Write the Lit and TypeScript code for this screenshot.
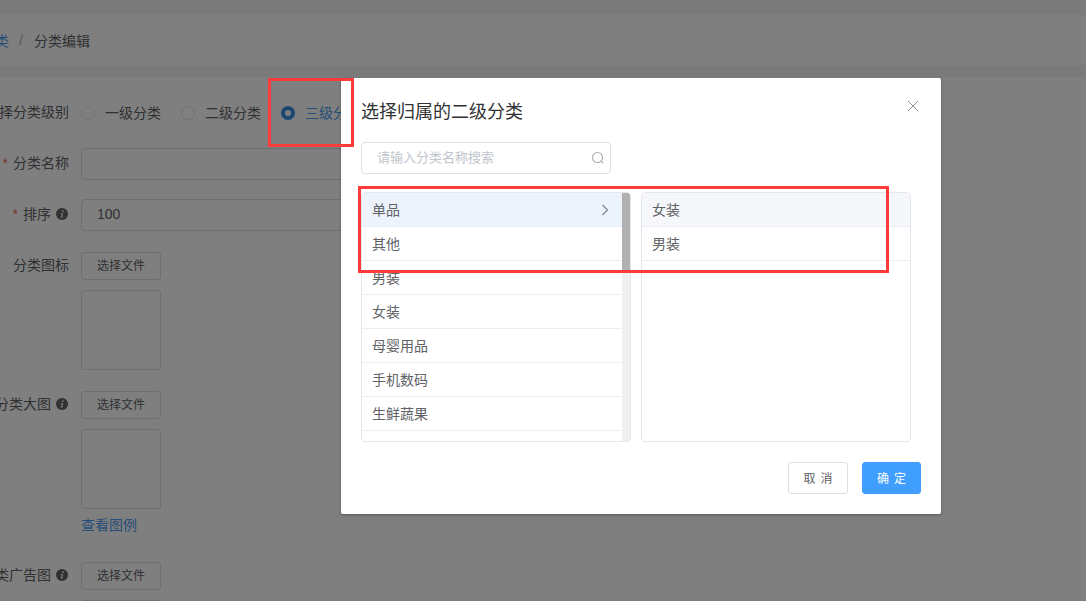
import { LitElement, html, css } from "lit";
import { customElement } from "lit/decorators.js";

const info = html`<svg class="info" viewBox="0 0 12 12"><circle cx="6" cy="6" r="6" fill="#606266"></circle><path d="M6.900 2.200a.9.9 0 1 1-.1 1.800.9.9 0 0 1 .1-1.800ZM4.600 5.200h2.600L6.300 8.700h.7l-.1.7H4.400l.1-.7h.6l.7-2.800H4.500Z" fill="#fff"></path></svg>`;
const leftItems = ["单品", "其他", "男装", "女装", "母婴用品", "手机数码", "生鲜蔬果", ""];
const rightItems = ["女装", "男装"];

@customElement("app-root")
export class AppRoot extends LitElement {
  static styles = css`
    :host {
      display: block;
      position: relative;
      width: 1086px;
      height: 601px;
      overflow: hidden;
      background: #fff;
      font-family: "Liberation Sans", "Noto Sans CJK SC", sans-serif;
      font-size: 14px;
      color: #606266;
    }
    .topbar { height: 15px; background: #f4f4f4; }
    .crumbs {
      height: 50px;
      display: flex;
      align-items: center;
      gap: 9px;
      margin-left: -19px;
      background: #fff;
    }
    .crumbs .link { color: #4a9cf0; }
    .crumbs .sep { color: #a8abb2; margin: 0 2px 0 1px; }
    .crumbs .cur { color: #606266; }
    .gap { height: 12px; background: #f4f4f4; }
    .form { padding-top: 20px; display: flex; flex-direction: column; }
    .row { display: flex; align-items: flex-start; }
    .label {
      width: 69px;
      flex: none;
      margin-right: 12px;
      box-sizing: border-box;
      padding-bottom: 2px;
      display: flex;
      justify-content: flex-end;
      align-items: center;
      gap: 5px;
      white-space: nowrap;
      height: 28px;
    }
    .tall { height: 32px; }
    .txt { display: block; padding-bottom: 2px; }
    .star { color: #f56c6c; margin-right: 5px; }
    .info { width: 12px; height: 12px; flex: none; margin-right: 1px; }
    .radios { display: flex; align-items: center; height: 32px; }
    .radio { display: flex; align-items: center; width: 100px; white-space: nowrap; }
    .dot {
      width: 14px;
      height: 14px;
      box-sizing: border-box;
      border: 1px solid #e0e2e6;
      border-radius: 50%;
      margin-right: 10px;
      flex: none;
    }
    .on { color: #4a9cf0; }
    .on .dot { border: 4px solid #3a8ee6; background: #fff; }
    .inp {
      width: 500px;
      height: 32px;
      box-sizing: border-box;
      border: 1px solid #dcdfe6;
      border-radius: 4px;
      padding: 0 0 2px 15px;
      display: flex;
      align-items: center;
    }
    .btn {
      width: 80px;
      height: 28px;
      box-sizing: border-box;
      border: 1px solid #dcdfe6;
      border-radius: 3px;
      padding-bottom: 3px;
      font-size: 12px;
      display: flex;
      align-items: center;
      justify-content: center;
    }
    .preview {
      width: 80px;
      height: 80px;
      box-sizing: border-box;
      border: 1px solid #dcdfe6;
      border-radius: 3px;
      margin-top: 10px;
    }
    .view { color: #4a9cf0; height: 20px; line-height: 20px; margin-top: 6px; }
    .m19 { margin-top: 19px; }
    .m21 { margin-top: 21px; }
    .m27 { margin-top: 27px; }

    .mask {
      position: absolute;
      inset: 0;
      background: rgba(0, 0, 0, 0.5);
    }
    .dialog {
      position: absolute;
      left: 341px;
      top: 78px;
      width: 600px;
      height: 436px;
      box-sizing: border-box;
      background: #fff;
      border-radius: 2px;
      box-shadow: 0 1px 3px rgba(0, 0, 0, 0.3);
      padding: 20px;
      display: flex;
      flex-direction: column;
    }
    .title {
      font-size: 18px;
      line-height: 28px;
      color: #303133;
    }
    .close {
      position: absolute;
      right: 22px;
      top: 22px;
      width: 12px;
      height: 12px;
    }
    .search {
      width: 250px;
      height: 32px;
      box-sizing: border-box;
      margin-top: 16px;
      border: 1px solid #dcdfe6;
      border-radius: 4px;
      padding: 0 5px 0 15px;
      display: flex;
      align-items: center;
      justify-content: space-between;
      font-size: 13px;
      color: #c0c4cc;
    }
    .search span { padding-bottom: 4px; }
    .search svg { width: 14px; height: 14px; }
    .panels { display: flex; gap: 10px; margin-top: 18px; height: 250px; }
    .panel {
      width: 270px;
      box-sizing: border-box;
      border: 1px solid #e4e7ed;
      border-radius: 4px;
      overflow: hidden;
      display: flex;
    }
    .list { flex: 1; min-width: 0; overflow: hidden; }
    .item {
      height: 34px;
      box-sizing: border-box;
      border-bottom: 1px solid #ebeef5;
      padding: 0 10px;
      display: flex;
      align-items: center;
      justify-content: space-between;
    }
    .item span { padding-bottom: 2px; }
    .left .active { background: #ecf3fd; }
    .right .active { background: #f5f7fa; }
    .item svg { width: 10px; height: 12px; margin-right: 2px; }
    .track { width: 8px; flex: none; background: #f0f0f0; }
    .thumb { height: 79px; background: #b1b1b1; }
    .footer {
      margin-top: 20px;
      display: flex;
      justify-content: flex-end;
      gap: 14px;
    }
    .fbtn {
      width: 60px;
      height: 32px;
      box-sizing: border-box;
      border: 1px solid #dcdfe6;
      border-radius: 3px;
      padding-bottom: 2px;
      font-size: 12px;
      word-spacing: 1.500px;
      display: flex;
      align-items: center;
      justify-content: center;
      white-space: pre;
    }
    .primary { width: 59px; background: #409eff; border-color: #409eff; color: #fff; }
    .mark {
      position: absolute;
      box-sizing: border-box;
      border: 3px solid #ff3b3b;
    }
    .m1 { left: 268px; top: 78px; width: 86px; height: 69px; }
    .m2 { left: 358px; top: 186px; width: 531px; height: 87px; }
  `;

  render() {
    return html`
      <div class="topbar"></div>
      <div class="crumbs">
        <span class="link">分类</span><span class="sep">/</span><span class="cur">分类编辑</span>
      </div>
      <div class="gap"></div>
      <div class="form">
        <div class="row">
          <div class="label tall"><span class="txt">选择分类级别</span></div>
          <div class="radios">
            <div class="radio"><span class="dot"></span><span class="txt">一级分类</span></div>
            <div class="radio"><span class="dot"></span><span class="txt">二级分类</span></div>
            <div class="radio on"><span class="dot"></span><span class="txt">三级分类</span></div>
          </div>
        </div>
        <div class="row m19">
          <div class="label tall"><span class="txt"><span class="star">*</span>分类名称</span></div>
          <div class="inp"></div>
        </div>
        <div class="row m19">
          <div class="label tall"><span class="txt"><span class="star">*</span>排序</span>${info}</div>
          <div class="inp">100</div>
        </div>
        <div class="row m21">
          <div class="label"><span class="txt">分类图标</span></div>
          <div>
            <div class="btn">选择文件</div>
            <div class="preview"></div>
          </div>
        </div>
        <div class="row m21">
          <div class="label"><span class="txt">分类大图</span>${info}</div>
          <div>
            <div class="btn">选择文件</div>
            <div class="preview"></div>
            <div class="view">查看图例</div>
          </div>
        </div>
        <div class="row m27">
          <div class="label"><span class="txt">分类广告图</span>${info}</div>
          <div>
            <div class="btn">选择文件</div>
            <div class="preview"></div>
          </div>
        </div>
      </div>

      <div class="mask"></div>
      <div class="dialog">
        <div class="title">选择归属的二级分类</div>
        <svg class="close" viewBox="0 0 12 12">
          <path d="M1 1l10 10M11 1L1 11" stroke="#909399" stroke-width="1" fill="none"></path>
        </svg>
        <div class="search">
          <span>请输入分类名称搜索</span>
          <svg viewBox="0 0 14 14" fill="none" stroke="#a8abb2" stroke-width="1.100">
            <circle cx="6.500" cy="6.500" r="5"></circle>
            <path d="M10.200 10.200L12.300 12.300"></path>
          </svg>
        </div>
        <div class="panels">
          <div class="panel left">
            <div class="list">
              ${leftItems.map(
                (t, i) => html`<div class="item ${i === 0 ? "active" : ""}">
                  <span>${t}</span>
                  ${i === 0
                    ? html`<svg viewBox="0 0 10 12" fill="none" stroke="#7d8087" stroke-width="1.100">
                        <path d="M2.500 1l5 5-5 5"></path>
                      </svg>`
                    : ""}
                </div>`
              )}
            </div>
            <div class="track"><div class="thumb"></div></div>
          </div>
          <div class="panel right">
            <div class="list">
              ${rightItems.map(
                (t, i) => html`<div class="item ${i === 0 ? "active" : ""}"><span>${t}</span></div>`
              )}
            </div>
          </div>
        </div>
        <div class="footer">
          <div class="fbtn">取 消</div>
          <div class="fbtn primary">确 定</div>
        </div>
      </div>
      <div class="mark m1"></div>
      <div class="mark m2"></div>
    `;
  }
}
